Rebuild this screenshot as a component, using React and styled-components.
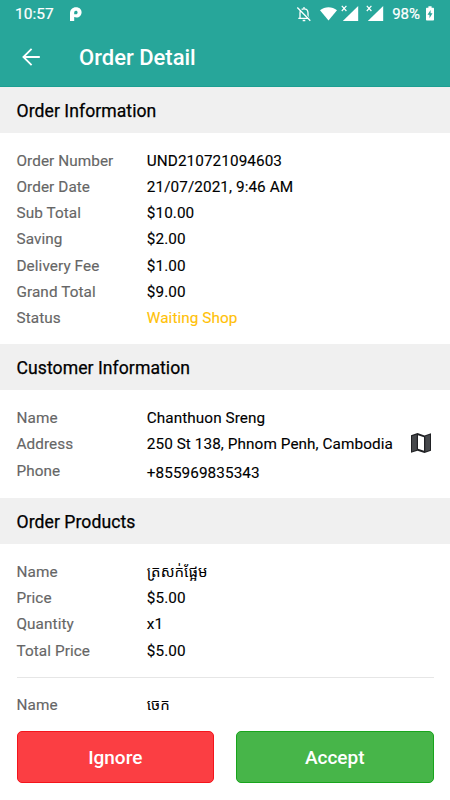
import React from "react";
import styled, { createGlobalStyle } from "styled-components";


const orderInfo = [
  { label: "Order Number", value: "UND210721094603" },
  { label: "Order Date", value: "21/07/2021, 9:46 AM" },
  { label: "Sub Total", value: "$10.00" },
  { label: "Saving", value: "$2.00" },
  { label: "Delivery Fee", value: "$1.00" },
  { label: "Grand Total", value: "$9.00" },
  { label: "Status", value: "Waiting Shop", color: "#ffc107" },
]

const products = [
  [
    { label: "Name", value: "ត្រសក់ផ្អែម", khmer: true },
    { label: "Price", value: "$5.00" },
    { label: "Quantity", value: "x1" },
    { label: "Total Price", value: "$5.00" },
  ],
  [
    { label: "Name", value: "ចេក", khmer: true },
  ],
]

const Signal = () => (
  <svg width="18" height="17" viewBox="0 0 18 17">
    <path d="M17.2 4V19H1.8z" transform="translate(0 -3)" fill="#fff" />
    <path d="M.8 .8l4.600 5.200M5.400 .8L.8 6" stroke="#fff" strokeWidth="1.200" />
  </svg>
)

const Rows = ({ items }) => items.map((item) => (
  <Row key={item.label}>
    <Label>{item.label}</Label>
    <Value $color={item.color} $khmer={item.khmer}>{item.value}</Value>
  </Row>
))

const App = () => {
  return (
    <Screen>
      <GlobalStyle />
      <Header>
        <StatusBar>
          <Clock>10:57</Clock>
          <AppLogo width="12" height="14" viewBox="0 0 12 14">
            <path d="M0 14V6.200C0 2.600 2.500.2 6 .2s5.600 2.200 5.600 5.100-2.200 5.300-5.100 5.300c-.9 0-1.700-.2-2.300-.5V14z" fill="#fff" />
            <path d="M4.200 7.200V5.500c0-1.100.7-1.800 1.700-1.800s1.700.7 1.700 1.700-.7 1.800-1.700 1.800z" fill="#27a69a" />
          </AppLogo>
          <Icons>
            <Bell width="16" height="16" viewBox="0 0 16 16" fill="none" stroke="#fff" strokeWidth="1.300">
              <path d="M4 12V7c0-2.400 1.500-4.100 4-4.100S12 4.600 12 7v5M2.300 12.300h11.400M8 1v2M6.700 14.500h2.600" />
              <path d="M2.600 1.200l12.600 13.400" stroke="#27a69a" strokeWidth="1.300" />
              <path d="M1.300 1.500l13 13.300" />
            </Bell>
            <Wifi width="17" height="14" viewBox="0 0 17 14">
              <path d="M0 3.200C5-.8 12-.8 17 3.200L8.500 13.600z" fill="#fff" />
            </Wifi>
            <Signal />
            <SecondSim><Signal /></SecondSim>
            <Percent>98%</Percent>
            <Battery width="8" height="15" viewBox="0 0 8 15">
              <path d="M2.400.3h3.200v1.500H7c.6 0 1 .4 1 1v10.700c0 .6-.4 1-1 1H1c-.6 0-1-.4-1-1V2.800c0-.6.400-1 1-1h1.400z" fill="#fff" />
              <path d="M4.600 4L1.500 8.800h2v3.500l3-5H4.600z" fill="#27a69a" />
            </Battery>
          </Icons>
        </StatusBar>
        <Toolbar>
          <Back aria-label="Back">
            <svg width="18" height="18" viewBox="0 0 18 18" fill="none" stroke="#fff" strokeWidth="1.800">
              <path d="M17.800 9H1.500M9.600.8L1.400 9l8.200 8.200" />
            </svg>
          </Back>
          <Title>Order Detail</Title>
        </Toolbar>
      </Header>

      <SectionTitle>Order Information</SectionTitle>
      <Section>
        <Rows items={orderInfo} />
      </Section>

      <SectionTitle>Customer Information</SectionTitle>
      <Customer>
        <div>
          <Label>Name</Label>
          <Label>Address</Label>
          <Label>Phone</Label>
        </div>
        <CustomerValues>
          <Value>Chanthuon Sreng</Value>
          <Address>
            <Value>250 St 138, Phnom Penh, Cambodia</Value>
            <MapIcon width="20" height="20" viewBox="0 0 20 20">
              <path d="M0 2.300L6.500.1l7 2.300L20 .2v17.500L13.500 20l-7-2.300L0 19.800z" fill="#202124" />
              <path d="M1 3.200L5.800 1.600v15.200L1 18.500zM14.300 3.300L19 1.700V17l-4.700 1.600z" fill="#46484b" />
              <path d="M7 2.200l6 2v13.600l-6-2z" fill="#fff" />
            </MapIcon>
          </Address>
          <Value>+855969835343</Value>
        </CustomerValues>
      </Customer>

      <SectionTitle>Order Products</SectionTitle>
      <Products>
        {products.map((items, i) => (
          <Product key={i}>
            <Rows items={items} />
          </Product>
        ))}
      </Products>

      <Actions>
        <Button $bg="#fb3e43" $border="#f4151c">Ignore</Button>
        <Button $bg="#47b549" $border="#18a51c">Accept</Button>
      </Actions>
    </Screen>
  )
}

export default App

const GlobalStyle = createGlobalStyle`
  * {
    box-sizing: border-box;
  }
  body {
    margin: 0;
    background-color: #ffffff;
    font-family: Roboto, "Noto Sans Khmer", "Noto Sans", sans-serif;
  }
`
const Screen = styled.div`
  width: 450px;
  height: 800px;
  display: flex;
  flex-direction: column;
  overflow: hidden;
  background-color: #ffffff;
`
const Header = styled.header`
  height: 87px;
  flex-shrink: 0;
  background-color: #27a69a;
  border-bottom: 1px solid #1c9f92;
  color: #ffffff;
`
const StatusBar = styled.div`
  height: 28px;
  padding: 0 16px 0 15px;
  display: flex;
  align-items: center;
`
const Clock = styled.span`
  width: 55px;
  font-size: 15.5px;
  -webkit-text-stroke: .2px;
`
const AppLogo = styled.svg`
  margin-top: -1px;
`
const Icons = styled.div`
  margin-left: auto;
  display: flex;
  align-items: flex-start;
`
const Bell = styled.svg`
  margin-top: 1px;
`
const Battery = styled.svg`
  margin-top: 1px;
`
const Wifi = styled.svg`
  margin: 2px 4px 0 8px;
`
const SecondSim = styled.span`
  display: flex;
  margin-left: 7px;
`
const Percent = styled.span`
  margin: 0 6px 0 8px;
  font-size: 15px;
  line-height: 18px;
  -webkit-text-stroke: .2px;
`
const Toolbar = styled.div`
  height: 58px;
  padding-left: 22px;
  display: flex;
  align-items: center;
`
const Back = styled.button`
  width: 57px;
  padding: 0;
  border: none;
  background: none;
  display: flex;
`
const Title = styled.h1`
  margin: 0;
  font-size: 22px;
  font-weight: 500;
`
const SectionTitle = styled.h2`
  height: 46px;
  flex-shrink: 0;
  margin: 0;
  padding: 2px 16.5px 0;
  display: flex;
  align-items: center;
  background-color: #f0f0f0;
  font-size: 17.6px;
  font-weight: 400;
  letter-spacing: .06px;
  -webkit-text-stroke: .25px;
  color: #000000;
`
const Section = styled.section`
  height: 211px;
  flex-shrink: 0;
  padding: 14.7px 16.5px 0;
`
const Row = styled.div`
  height: 26.25px;
  display: flex;
  align-items: center;
`
const Label = styled.div`
  width: 130.3px;
  flex-shrink: 0;
  font-size: 15.3px;
  line-height: 26.25px;
  letter-spacing: .08px;
  -webkit-text-stroke: .15px;
  color: #666666;
`
const Value = styled.div`
  font-size: ${p => p.$khmer ? "15px" : "15.3px"};
  line-height: 26.25px;
  letter-spacing: ${p => p.$khmer ? "0" : ".08px"};
  -webkit-text-stroke: ${p => p.$khmer ? "0" : ".12px"};
  color: ${p => p.$color || "#000000"};
  white-space: nowrap;
`
const Customer = styled(Section)`
  height: 108px;
  padding-top: 15px;
  display: flex;
`
const CustomerValues = styled.div`
  flex: 1;
`
const Address = styled.div`
  height: 28.5px;
  display: flex;
  align-items: flex-start;
  justify-content: space-between;
`
const MapIcon = styled.svg`
  margin: 2px 3px 0 0;
`
const Products = styled(Section)`
  height: 187px;
  padding-top: 0;
  overflow: hidden;
`
const Product = styled.div`
  padding: 14.8px 0 12.8px;
  border-bottom: 1px solid #e6e6e6;

  &:last-child {
    border-bottom: none;
  }
`
const Actions = styled.footer`
  padding: 0 16.5px;
  display: flex;
  gap: 22px;
`
const Button = styled.button`
  flex: 1;
  height: 52px;
  border: 1px solid ${p => p.$border};
  border-radius: 5px;
  background-color: ${p => p.$bg};
  color: #ffffff;
  font-family: inherit;
  font-size: 19px;
  font-weight: 500;
`
